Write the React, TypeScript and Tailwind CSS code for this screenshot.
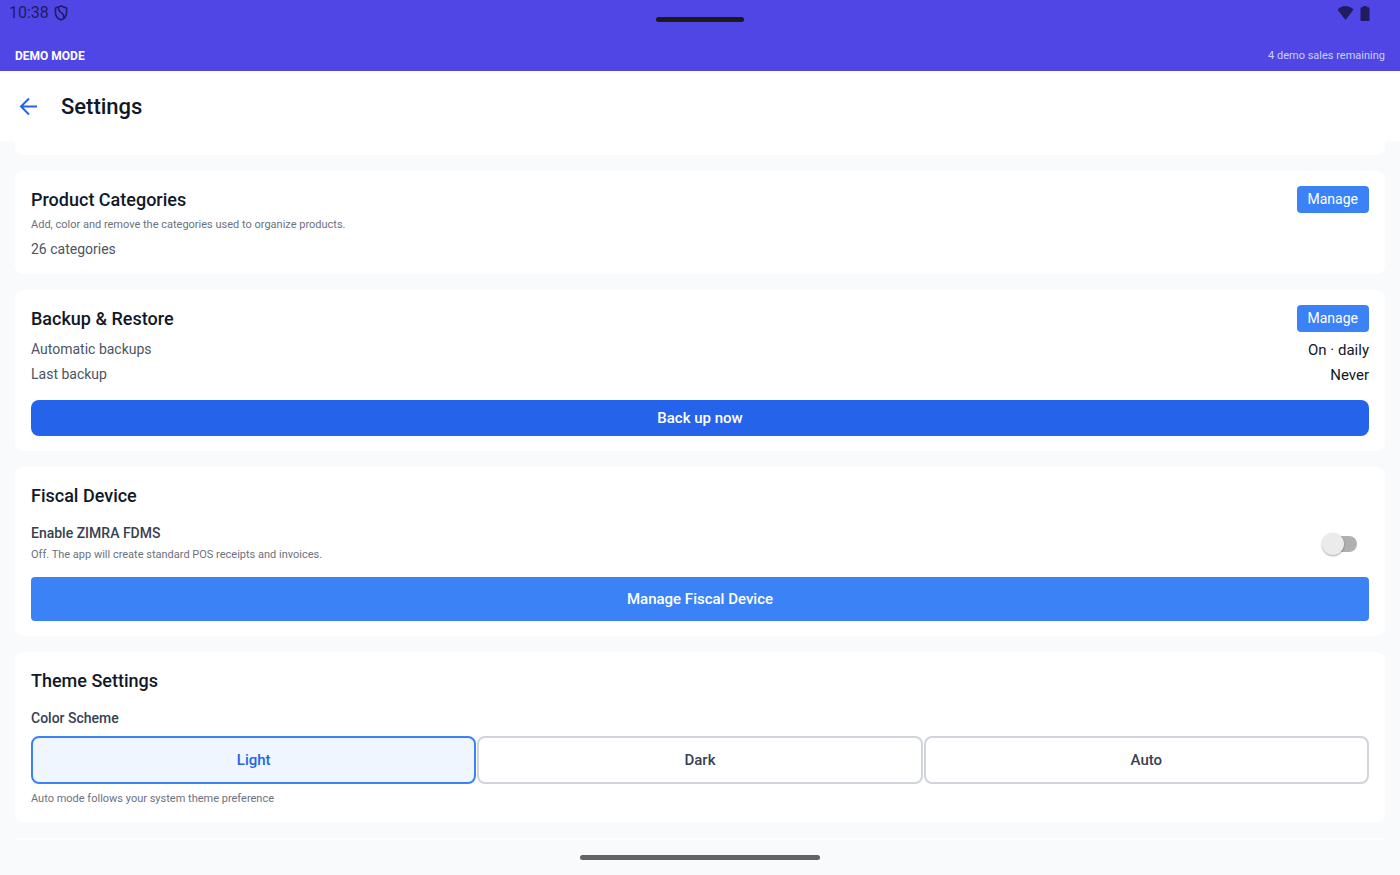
import { useState, type ReactNode } from 'react'

const schemes = ['Light', 'Dark', 'Auto']

function StatusBar() {
  return (
    <div className="relative flex h-[26px] items-center justify-between pr-[30px] pl-[9px] text-[#211b5f]">
      <div className="flex items-center gap-1">
        <span className="text-[16px] leading-[26px]">10:38</span>
        <svg width="16" height="16" viewBox="0 0 16 16" fill="none" stroke="currentColor" strokeWidth="1.6" aria-hidden="true">
          <path d="M8 1 13.600 3.100V7.500C13.600 11 11.200 13.800 8 15 4.800 13.800 2.400 11 2.400 7.500V3.100Z" />
          <path d="M5.800 2.200C5.200 4.800 6 6.300 8.200 7.700 10.500 9.200 11.300 10.600 10.800 13" />
        </svg>
      </div>
      <div className="absolute top-[17px] left-1/2 h-[5px] w-[88px] -translate-x-1/2 rounded-sm bg-[#1c1b1a]" />
      <div className="flex items-center gap-[6px]">
        <svg width="17" height="14" viewBox="0 0 17 14" fill="currentColor" aria-hidden="true">
          <path d="M8.500 14 0.500 3.600C2.700 1.300 5.500 0 8.500 0s5.800 1.300 8 3.600Z" />
        </svg>
        <svg width="10" height="15" viewBox="0 0 10 15" fill="currentColor" aria-hidden="true">
          <path d="M3 0h4v1.300h1.500c.6 0 1 .4 1 1V14c0 .6-.4 1-1 1H1.500c-.6 0-1-.4-1-1V2.300c0-.6.4-1 1-1H3Z" />
        </svg>
      </div>
    </div>
  )
}

function Card({ title, onManage, children }: { title: string; onManage?: () => void; children: ReactNode }) {
  return (
    <section className="rounded-lg bg-white px-4 py-[15px]">
      <div className="flex h-[27px] items-center justify-between">
        <h2 className="text-[18px] leading-[26px] font-medium text-[#111827]">{title}</h2>
        {onManage && (
          <button onClick={onManage} className="h-[27px] rounded bg-[#3b82f6] px-[11px] text-[14px] leading-[19px] text-white">
            Manage
          </button>
        )}
      </div>
      {children}
    </section>
  )
}

function InfoRow({ label, value }: { label: string; value: string }) {
  return (
    <div className="flex items-start justify-between">
      <span className="text-[14px] leading-[19px] text-[#4b5563]">{label}</span>
      <span className="text-[15px] leading-[21px] text-[#111827]">{value}</span>
    </div>
  )
}

export default function App() {
  const [scheme, setScheme] = useState('Light')
  const [fiscal, setFiscal] = useState(false)
  const [lastBackup, setLastBackup] = useState('Never')

  const openManage = () => {}

  return (
    <div className="flex h-screen flex-col overflow-hidden bg-[#f9fafb] font-[Roboto,sans-serif]">
      <div className="shrink-0 bg-[#4f46e5]">
        <StatusBar />
        <div className="mt-[15px] flex h-[30px] items-center justify-between px-[15px]">
          <span className="text-[12px] leading-[16px] font-bold text-white">DEMO MODE</span>
          <span className="text-[11px] leading-[16px] text-[#c7d2fe]">4 demo sales remaining</span>
        </div>
      </div>

      <header className="flex h-[70px] shrink-0 items-center gap-[23px] bg-white px-[19px]">
        <button aria-label="Back" className="text-[#2563eb]">
          <svg width="19" height="19" viewBox="0 0 19 19" fill="none" stroke="currentColor" strokeWidth="2" aria-hidden="true">
            <path d="M18 9.500H2.500M10 1.500 2 9.500l8 8" />
          </svg>
        </button>
        <h1 className="pt-0.5 text-[22px] leading-[30px] font-medium text-[#111827]">Settings</h1>
      </header>

      <main className="flex min-h-0 flex-1 flex-col gap-4 overflow-hidden px-[15px]">
        <div className="h-[14px] shrink-0 rounded-b-lg bg-white" />

        <Card title="Product Categories" onManage={openManage}>
          <p className="mt-1 text-[11px] leading-[16px] text-[#6b7280]">
            Add, color and remove the categories used to organize products.
          </p>
          <p className="mt-[7px] text-[14px] leading-[19px] text-[#4b5563]">26 categories</p>
        </Card>

        <Card title="Backup & Restore" onManage={openManage}>
          <div className="mt-2 flex flex-col gap-1">
            <InfoRow label="Automatic backups" value="On · daily" />
            <InfoRow label="Last backup" value={lastBackup} />
          </div>
          <button
            onClick={() => setLastBackup('Just now')}
            className="mt-[14px] h-[36px] w-full rounded-lg bg-[#2563eb] text-[15px] leading-[22px] font-medium text-white"
          >
            Back up now
          </button>
        </Card>

        <Card title="Fiscal Device">
          <div className="mt-[15px] flex items-center justify-between pr-3">
            <div>
              <label htmlFor="fdms" className="block text-[14px] leading-[19px] font-medium text-[#374151]">
                Enable ZIMRA FDMS
              </label>
              <p className="mt-1 text-[11px] leading-[16px] text-[#6b7280]">
                Off. The app will create standard POS receipts and invoices.
              </p>
            </div>
            <span className="relative flex h-[24px] w-[35px] items-center justify-end">
              <input
                id="fdms"
                type="checkbox"
                role="switch"
                checked={fiscal}
                onChange={(e) => setFiscal(e.target.checked)}
                className="peer h-4 w-[32px] appearance-none rounded-full bg-[#b0b0b0] checked:bg-[#93c5fd]"
              />
              <span className="pointer-events-none absolute top-px left-0 size-[22px] rounded-full bg-[#ebebeb] shadow-[0_1px_2px_rgba(0,0,0,0.35)] peer-checked:left-[13px] peer-checked:bg-[#3b82f6]" />
            </span>
          </div>
          <button className="mt-[14px] h-[44px] w-full rounded bg-[#3b82f6] text-[15px] leading-[22px] font-medium text-white">
            Manage Fiscal Device
          </button>
        </Card>

        <Card title="Theme Settings">
          <h3 className="mt-[15px] text-[14px] leading-[19px] font-medium text-[#374151]">Color Scheme</h3>
          <div className="mt-2 flex gap-px">
            {schemes.map((name) => (
              <button
                key={name}
                aria-pressed={scheme === name}
                onClick={() => setScheme(name)}
                className={`${
                  scheme === name
                    ? 'border-[#3b82f6] bg-[#eff6ff] text-[#2563eb]'
                    : 'border-[#d1d5db] bg-white text-[#374151]'
                } h-[48px] flex-1 rounded-lg border-2 text-[15px] leading-[22px] font-medium`}
              >
                {name}
              </button>
            ))}
          </div>
          <p className="mt-[7px] text-[11px] leading-[16px] text-[#6b7280]">
            Auto mode follows your system theme preference
          </p>
        </Card>

        <div className="flex-1 rounded-t-lg bg-white" />
      </main>

      <div className="flex h-[35px] shrink-0 items-center justify-center">
        <div className="h-[5px] w-[240px] rounded-full bg-[#636363]" />
      </div>
    </div>
  )
}
